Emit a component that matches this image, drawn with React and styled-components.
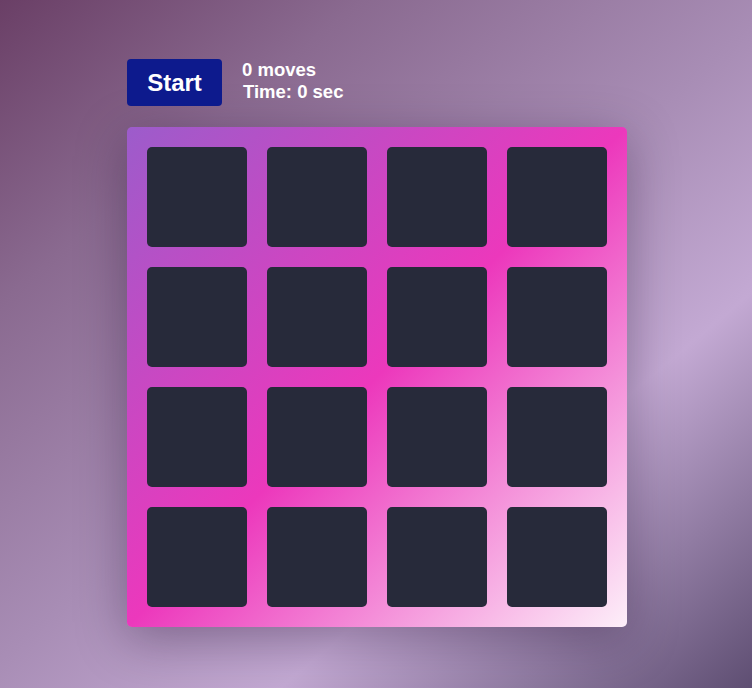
import React from "react";
import styled, { createGlobalStyle } from "styled-components";

const GlobalStyle = createGlobalStyle`
  html, body {
    margin: 0;
    padding: 0;
  }
  body {
    min-height: 688px;
    font-family: "Liberation Sans", Arial, sans-serif;
    background: linear-gradient(
      140deg,
      #6a3f66 0%,
      #8a6a90 23%,
      #a88db5 50%,
      #c3a9d3 70%,
      #5e4e72 100%
    );
    background-attachment: fixed;
  }
`;

const Page = styled.div`
  padding: 59px 0 0 127px;
`;

const Controls = styled.div`
  display: flex;
  align-items: center;
  gap: 20px;
  margin-bottom: 21px;
`;

const StartButton = styled.button`
  width: 95px;
  height: 47px;
  border: none;
  border-radius: 4px;
  background: #0d1a8d;
  color: #fff;
  font-family: "Liberation Sans", Arial, sans-serif;
  font-weight: bold;
  font-size: 24px;
  cursor: pointer;
`;

const Stats = styled.div`
  color: #fff;
  font-weight: bold;
  font-size: 18.5px;
  line-height: 22px;
  margin-top: -4px;
`;

const StatLine = styled.div`
  padding-left: ${(p) => (p.$indent ? "1px" : "0")};
`;

const Board = styled.div`
  width: 500px;
  height: 500px;
  box-sizing: border-box;
  padding: 20px;
  display: grid;
  grid-template-columns: repeat(4, 100px);
  grid-auto-rows: 100px;
  gap: 20px;
  border-radius: 5px;
  background: linear-gradient(135deg, #9c5ccb 0%, #ec38bc 50%, #fdeff9 100%);
  box-shadow: 0 12px 50px rgba(30, 10, 40, 0.35);
`;

const Card = styled.div`
  background: #272a3a;
  border-radius: 5px;
`;

export default function App() {
  const cards = Array.from({ length: 16 }, (_, i) => i);
  return (
    <Page>
      <GlobalStyle />
      <Controls>
        <StartButton>Start</StartButton>
        <Stats>
          <StatLine>0 moves</StatLine>
          <StatLine $indent>Time: 0 sec</StatLine>
        </Stats>
      </Controls>
      <Board>
        {cards.map((i) => (
          <Card key={i} />
        ))}
      </Board>
    </Page>
  );
}
